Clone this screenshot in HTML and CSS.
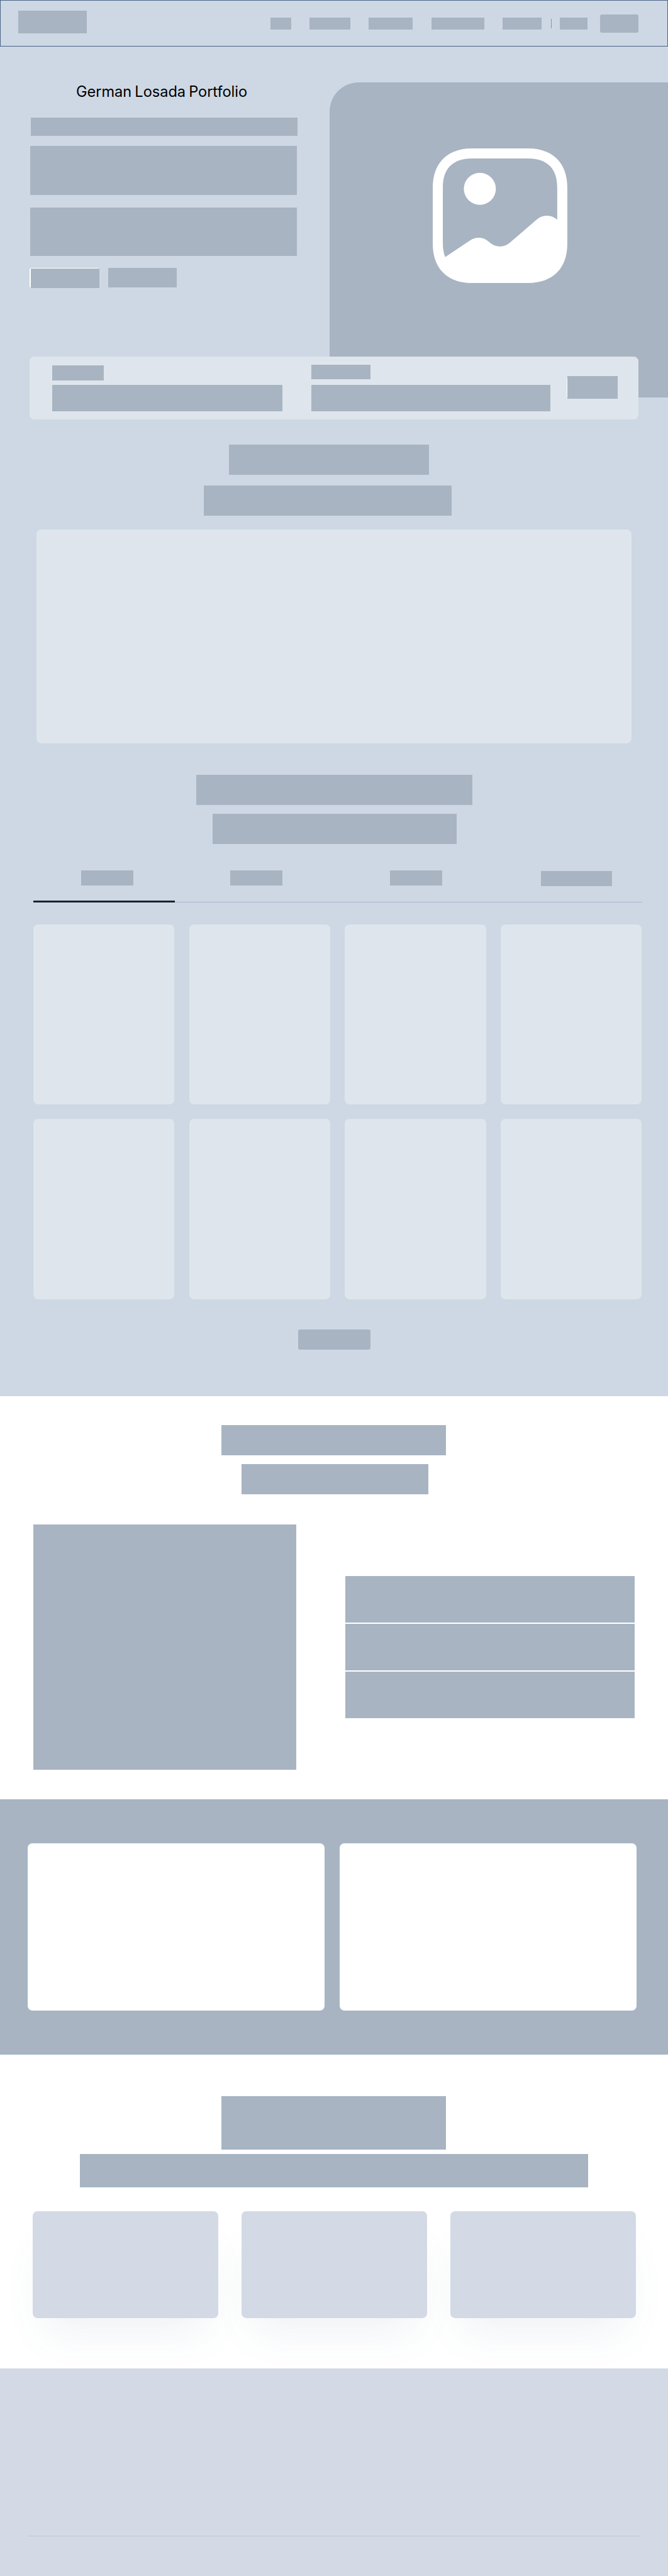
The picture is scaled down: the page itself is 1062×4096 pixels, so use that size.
FILE: index.html
```html
<!DOCTYPE html>
<html lang="en">
<head>
<meta charset="utf-8">
<title>German Losada Portfolio</title>
<link rel="stylesheet" href="styles.css">
</head>
<body>
<div class="upper">
  <header class="header">
    <div class="block logo"></div>
    <nav class="nav">
      <span class="block nav-item w44"></span>
      <span class="block nav-item w88"></span>
      <span class="block nav-item w95"></span>
      <span class="block nav-item w114"></span>
      <span class="block nav-item w83"></span>
      <span class="separator"></span>
      <span class="block nav-item w60"></span>
      <span class="block nav-button"></span>
    </nav>
  </header>

  <section class="hero">
    <div class="intro">
      <h1 class="title">German Losada Portfolio</h1>
      <div class="block lead"></div>
      <div class="block copy"></div>
      <div class="block copy second"></div>
      <div class="actions">
        <div class="action-primary"><div class="block action"></div></div>
        <div class="block action"></div>
      </div>
    </div>
    <div class="block picture">
      <svg class="picture-icon" viewBox="2 2 20 20" fill="#fff">
        <path d="M9 10.38a2.38 2.38 0 1 0 0-4.76 2.38 2.38 0 0 0 0 4.76Z"/>
        <path d="M16.19 2H7.81C4.17 2 2 4.17 2 7.81v8.38c0 1.09.19 2.04.56 2.84C3.42 20.93 5.26 22 7.81 22h8.38c3.64 0 5.81-2.17 5.81-5.81V7.81C22 4.17 19.83 2 16.19 2Zm4.18 10.5c-.78-.67-2.04-.67-2.82 0l-4.16 3.57c-.78.67-2.04.67-2.82 0l-.34-.28c-.71-.62-1.84-.68-2.64-.14l-3.74 2.51c-.22-.56-.35-1.21-.35-1.97V7.81C3.5 4.99 4.99 3.5 7.81 3.5h8.38c2.82 0 4.31 1.49 4.31 4.31v4.8l-.13-.11Z"/>
      </svg>
    </div>
  </section>

  <section class="search">
    <div class="field field-a"><div class="block label"></div><div class="block input"></div></div>
    <div class="field field-b"><div class="block label"></div><div class="block input"></div></div>
    <div class="search-button"><div class="block search-fill"></div></div>
  </section>

  <section class="feature">
    <div class="block bar w432"></div>
    <div class="block bar w534"></div>
    <div class="panel feature-panel"></div>
  </section>

  <section class="catalog">
    <div class="block bar w594"></div>
    <div class="block bar w525"></div>
    <div class="tabs">
      <div class="tab active"><span class="block tab-label"></span></div>
      <div class="tab tab-2"><span class="block tab-label"></span></div>
      <div class="tab tab-3"><span class="block tab-label"></span></div>
      <div class="tab tab-4"><span class="block tab-label wide"></span></div>
    </div>
    <div class="grid">
      <div class="panel"></div><div class="panel"></div><div class="panel"></div><div class="panel"></div>
      <div class="panel"></div><div class="panel"></div><div class="panel"></div><div class="panel"></div>
    </div>
    <div class="block more"></div>
  </section>
</div>

<section class="about">
  <div class="block bar w483"></div>
  <div class="block bar w402"></div>
  <div class="about-row">
    <div class="block about-picture"></div>
    <div class="about-list">
      <div class="block"></div><div class="block"></div><div class="block"></div>
    </div>
  </div>
</section>

<section class="band">
  <div class="band-card"></div>
  <div class="band-card"></div>
</section>

<section class="services">
  <div class="block services-title"></div>
  <div class="block services-copy"></div>
  <div class="services-row">
    <div class="service"></div><div class="service"></div><div class="service"></div>
  </div>
</section>

<footer class="footer"><hr class="rule"></footer>
</body>
</html>
```

FILE: styles.css
```css
/* 1rem is ten design pixels; the design is 1440 wide. */
:root {
  font-size: 7.3776px;
  --block: #a8b4c2;
  --page: #cdd8e4;
  --panel: #dee5ec;
  --soft: #d3dae6;
}
* { box-sizing: border-box; }
body { margin: 0; background: #fff; font-family: Inter, "Open Sans", sans-serif; }
.block { background: var(--block); flex: none; }
.upper { height: 300.9rem; background: var(--page); overflow: clip; }

.header {
  height: 10rem;
  border: 1px solid #4a6386;
  display: flex;
  justify-content: space-between;
  padding: 2.2rem 6.2rem 0 3.8rem;
}
.logo { width: 14.8rem; height: 4.9rem; }
.nav { display: flex; align-items: center; height: 5.5rem; }
.nav-item { height: 2.7rem; margin-right: 4rem; }
.w44 { width: 4.4rem; margin-right: 3.9rem; }
.w88 { width: 8.8rem; }
.w95 { width: 9.5rem; }
.w114 { width: 11.4rem; }
.w83 { width: 8.3rem; margin-right: 2.1rem; }
.w60 { width: 6rem; margin-right: 2.7rem; }
.separator { width: 1px; height: 2.1rem; margin-right: 1.75rem; background: #8497b6; }
.nav-button { width: 8.3rem; height: 3.8rem; border-radius: .4rem; }

.hero { display: flex; justify-content: space-between; height: 66.8rem; padding: 7.7rem 0 0 6.5rem; }
.intro { width: 57.6rem; }
.title {
  margin: 0 0 3.4rem;
  height: 4.2rem;
  padding-left: 9.9rem;
  font-size: 3.2rem;
  line-height: 4.2rem;
  font-weight: 400;
  letter-spacing: -.005rem;
  word-spacing: -.2rem;
  white-space: nowrap;
  color: #000;
}
.lead { width: 57.5rem; height: 4rem; margin-left: .1rem; }
.copy { width: 57.5rem; height: 10.5rem; margin-top: 2.2rem; }
.copy.second { margin-top: 2.7rem; }
.actions { display: flex; margin: 2.5rem 0 0 -.1rem; gap: 1.9rem; }
.action-primary { padding: .2rem 0 0 .2rem; width: 15rem; height: 4.4rem; background: linear-gradient(#fff, #fff) 0 0 / 100% 4.2rem no-repeat; border-radius: .4rem .3rem 0 .4rem; }
.action { width: 14.8rem; height: 4.2rem; }
.actions > .action { margin-top: .1rem; }
.picture { width: 72.9rem; height: 68rem; border-top-left-radius: 6.3rem; padding: 14.25rem 0 0 22.25rem; }
.picture-icon { display: block; width: 29rem; height: 29rem; }

.search {
  position: relative;
  display: flex;
  width: 131.2rem;
  height: 13.6rem;
  margin-left: 6.4rem;
  padding: 0 0 0 4.8rem;
  border-radius: 1rem;
  background: var(--panel);
}
.field-a { width: 49.7rem; margin-right: 6.2rem; padding-top: 2rem; }
.field-b { width: 51.5rem; margin-right: 3.5rem; padding-top: 1.8rem; }
.field-a .label { width: 11.2rem; height: 3.2rem; margin-bottom: .9rem; }
.field-b .label { width: 12.8rem; height: 3.2rem; margin-bottom: 1.1rem; }
.input { height: 5.8rem; }
.search-button { margin-top: 4.2rem; height: 4.9rem; padding-left: .2rem; background: linear-gradient(#fff, #fff) 0 .6rem / 1rem 4.1rem no-repeat; }
.search-fill { width: 10.8rem; height: 4.9rem; }

.bar { height: 6.5rem; }
.feature { padding-top: 5.4rem; }
.w432 { width: 43.2rem; margin: 0 0 2.3rem 49.3rem; }
.w534 { width: 53.4rem; margin: 0 0 3.1rem 43.9rem; }
.panel { background: var(--panel); border-radius: 1rem; }
.feature-panel { width: 128.3rem; height: 46rem; margin-left: 7.8rem; }

.catalog { padding-top: 6.8rem; }
.w594 { width: 59.4rem; margin: 0 0 1.9rem 42.35rem; }
.w525 { width: 52.5rem; margin: 0 0 5.7rem 45.85rem; }
.tabs {
  display: flex;
  width: 131.2rem;
  height: 6.9rem;
  margin-left: 7.2rem;
  background: linear-gradient(#a9b8ce, #a9b8ce) 0 100% / 100% 1px no-repeat;
}
.tab { flex: none; width: 30.5rem; }
.active { border-bottom: .5rem solid #1a2030; padding-left: 10.35rem; }
.tab-label { display: block; width: 11.2rem; height: 3.3rem; }
.tab-2 { width: 34.5rem; padding-left: 11.9rem; }
.tab-3 { padding-left: 11.9rem; }
.tab-4 { width: 35.7rem; padding: .1rem 0 0 13.85rem; }
.wide { width: 15.3rem; }
.grid {
  display: grid;
  grid-template-columns: repeat(4, 30.4rem);
  grid-auto-rows: 38.8rem;
  justify-content: space-between;
  row-gap: 3.2rem;
  width: 131.1rem;
  margin: 4.7rem 0 0 7.2rem;
}
.more { width: 15.6rem; height: 4.4rem; margin: 6.5rem 0 0 64.2rem; border-radius: .4rem; }

.about { height: 86.9rem; padding-top: 6.3rem; }
.w483 { width: 48.3rem; margin: 0 0 1.9rem 47.75rem; }
.w402 { width: 40.2rem; margin: 0 0 6.5rem 52.1rem; }
.about-row { display: flex; align-items: center; gap: 10.6rem; padding-left: 7.2rem; }
.about-picture { width: 56.6rem; height: 52.8rem; }
.about-list { display: grid; grid-template-rows: repeat(3, 10rem); gap: .3rem; width: 62.4rem; }

.band { display: flex; gap: 3.2rem; height: 55rem; padding: 9.5rem 0 0 6rem; background: var(--block); }
.band-card { width: 64rem; height: 36rem; border-radius: 1rem; background: #fff; }

.services { height: 67.7rem; padding-top: 9rem; }
.services-title { width: 48.3rem; height: 11.5rem; margin-left: 47.75rem; }
.services-copy { width: 109.5rem; height: 7.3rem; margin: .9rem 0 5.1rem 17.2rem; }
.services-row { position: relative; display: flex; gap: 5rem; padding-left: 7rem; }
.service {
  width: 40rem;
  height: 23rem;
  border-radius: 1rem;
  background: var(--soft);
  box-shadow: 0 5.4rem 9rem -2.6rem rgba(70, 115, 130, .09);
}

.footer { height: 44.7rem; padding: 36rem 6rem 0; background: var(--soft); }
.rule { margin: 0; height: 1px; border: 0; background: #bacad6; }
```
